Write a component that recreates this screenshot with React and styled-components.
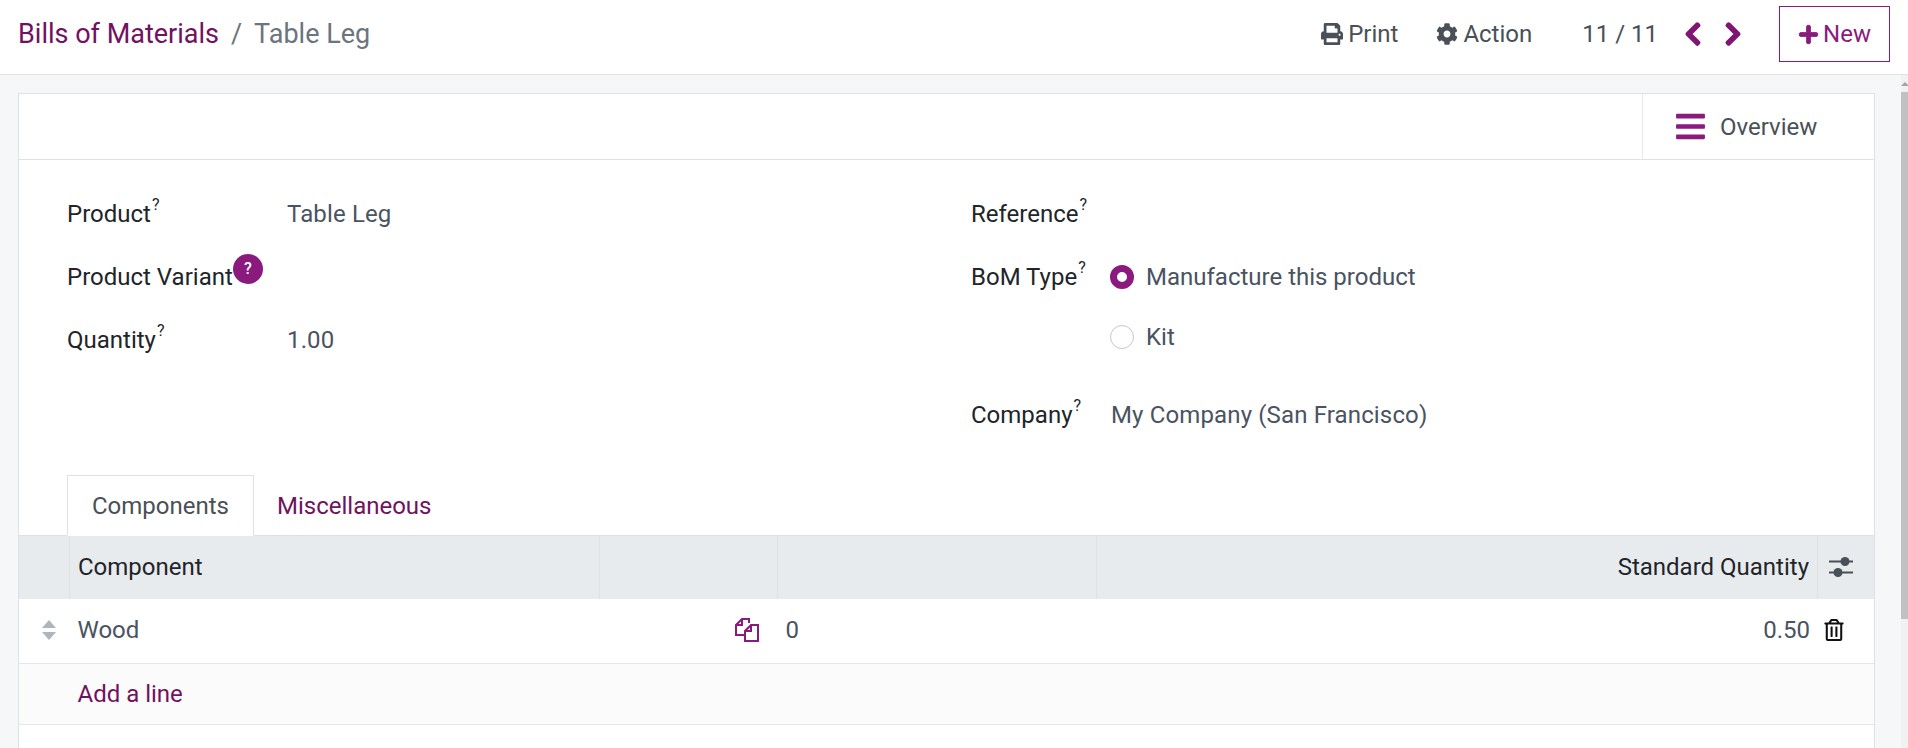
import React from 'react';
import styled, { createGlobalStyle } from 'styled-components';
import { FaPrint, FaCog, FaChevronLeft, FaChevronRight, FaPlus, FaBars, FaRegTrashAlt } from 'react-icons/fa';

const GlobalStyle = createGlobalStyle`
  html, body {
    margin: 0;
    height: 100%;
    overflow: hidden;
  }
  body {
    font-family: Roboto, "Liberation Sans", sans-serif;
    color: #4a4f59;
    background: #f6f7f9;
  }
`;

const Page = styled.div`
  width: 1908px;
  height: 748px;
  display: flex;
  flex-direction: column;
  overflow: hidden;
`;

const Header = styled.header`
  flex: none;
  height: 68px;
  display: flex;
  align-items: center;
  justify-content: space-between;
  padding: 0 18px 6px;
  background: #fff;
  border-bottom: 1px solid #dee2e6;
`;

const Breadcrumb = styled.div`
  display: flex;
  align-items: center;
  gap: 12px;
  font-size: 27px;
`;

const BreadLink = styled.a`
  color: #71125f;
`;

const BreadSep = styled.span`
  color: #6c757d;
`;

const BreadCurrent = styled.span`
  color: #6c757d;
`;

const HeaderActions = styled.div`
  display: flex;
  align-items: center;
`;

const ActionButton = styled.span`
  display: flex;
  align-items: center;
  gap: 5px;
  font-size: 24px;
  color: #495057;
  margin-right: ${(p) => p.$mr}px;
  svg {
    font-size: 22px;
  }
`;

const Pager = styled.span`
  font-size: 24px;
  color: #495057;
  margin-right: 22px;
`;

const PagerNav = styled.span`
  display: flex;
  align-items: center;
  gap: 14px;
  margin-right: 33px;
  color: #7f1673;
  font-size: 26px;
  svg {
    stroke: currentColor;
    stroke-width: 30;
  }
`;

const NewButton = styled.button`
  width: 111px;
  height: 56px;
  display: flex;
  align-items: center;
  justify-content: center;
  gap: 4px;
  padding: 0;
  background: #fff;
  border: 1px solid #8a1a7d;
  color: #8a1a7d;
  font-family: inherit;
  font-size: 24px;
  svg {
    font-size: 21px;
    stroke: currentColor;
    stroke-width: 20;
  }
`;

const Body = styled.div`
  flex: 1;
  display: flex;
  min-height: 0;
`;

const Content = styled.main`
  flex: 1;
  padding: 18px 26px 0 18px;
  min-width: 0;
`;

const Scrollbar = styled.div`
  flex: none;
  width: 7px;
  background: #f1f1f1;
  display: flex;
  flex-direction: column;
`;

const ScrollArrow = styled.div`
  height: 17px;
  display: flex;
  align-items: center;
  justify-content: center;
  &::before {
    content: '';
    border-left: 4px solid transparent;
    border-right: 4px solid transparent;
    border-bottom: 4px solid #a3a3a3;
    margin-left: 1px;
  }
`;

const ScrollThumb = styled.div`
  height: 527px;
  background: #c1c1c1;
`;

const Sheet = styled.section`
  background: #fff;
  border: 1px solid #dee2e6;
  height: 700px;
`;

const StatusBar = styled.div`
  height: 65px;
  display: flex;
  justify-content: flex-end;
  border-bottom: 1px solid #dee2e6;
`;

const OverviewButton = styled.div`
  width: 232px;
  display: flex;
  align-items: center;
  gap: 13px;
  padding-left: 31px;
  box-sizing: border-box;
  border-left: 1px solid #e6e8eb;
  font-size: 24px;
  color: #495057;
  svg {
    font-size: 33px;
    color: #8a1a7d;
  }
`;

const FormGrid = styled.div`
  display: grid;
  grid-template-columns: 904px 1fr;
  padding: 22px 48px 0;
`;

const FormColumn = styled.div`
  display: flex;
  flex-direction: column;
`;

const FieldRow = styled.div`
  display: flex;
  align-items: ${(p) => (p.$top ? 'flex-start' : 'center')};
  min-height: ${(p) => p.$h}px;
  margin-top: ${(p) => p.$mt || 0}px;
`;

const Label = styled.label`
  flex: none;
  width: ${(p) => p.$w}px;
  margin-top: ${(p) => p.$mt || 0}px;
  font-size: 24px;
  color: #212529;
  line-height: 44px;
`;

const Help = styled.sup`
  font-size: 16px;
  line-height: 0;
  vertical-align: 12px;
  margin-left: 1px;
  color: #212529;
`;

const HelpBadge = styled.span`
  position: absolute;
  top: -9px;
  display: inline-flex;
  align-items: center;
  justify-content: center;
  width: 30px;
  height: 30px;
  border-radius: 50%;
  background: #8a1a7d;
  color: #fff;
  font-size: 16px;
  font-weight: 500;
  line-height: 1;
`;

const LabelText = styled.span`
  position: relative;
  display: inline-block;
  line-height: 28px;
`;

const Value = styled.span`
  font-size: 24px;
  letter-spacing: 0.14px;
  color: #4a5361;
  line-height: 44px;
`;

const RadioGroup = styled.div`
  display: flex;
  flex-direction: column;
`;

const RadioRow = styled.div`
  display: flex;
  align-items: center;
  gap: 12px;
  height: ${(p) => p.$h}px;
  font-size: 24px;
  color: #4a5361;
`;

const Radio = styled.span`
  flex: none;
  width: 24px;
  height: 24px;
  box-sizing: border-box;
  border-radius: 50%;
  background: #fff;
  border: ${(p) => (p.$on ? '7.5px solid #8a1a7d' : '1px solid #c4c7cb')};
`;

const Tabs = styled.div`
  display: flex;
  padding-left: 48px;
  margin-top: 29px;
  position: relative;
`;

const Tab = styled.div`
  height: 61px;
  margin-bottom: -1px;
  box-sizing: border-box;
  display: flex;
  align-items: center;
  padding: 0 24px 0 ${(p) => (p.$active ? 24 : 22)}px;
  font-size: 24px;
  position: relative;
  background: ${(p) => (p.$active ? '#fff' : 'transparent')};
  color: ${(p) => (p.$active ? '#495057' : '#71125f')};
  border: 1px solid ${(p) => (p.$active ? '#dee2e6' : 'transparent')};
  border-bottom-color: ${(p) => (p.$active ? '#fff' : 'transparent')};
`;

const Table = styled.div`
  font-size: 24px;
`;

const Row = styled.div`
  display: grid;
  grid-template-columns: 50px 530px 178px 319px 1fr 57px;
  height: ${(p) => p.$h}px;
  padding-bottom: ${(p) => p.$pb || 0}px;
  box-sizing: border-box;
  align-items: center;
  background: ${(p) => p.$bg || '#fff'};
  border-bottom: 1px solid #e4e6e9;
  color: #4a5361;
`;

const HeadRow = styled(Row)`
  border-top: 1px solid #dee2e6;
  border-bottom: 0;
  color: #212529;
  align-items: stretch;
`;

const HeadCell = styled.div`
  display: flex;
  align-items: center;
  justify-content: ${(p) => (p.$right ? 'flex-end' : 'flex-start')};
  padding: 0 ${(p) => p.$pad ?? 8}px 1px;
  border-left: ${(p) => (p.$first ? '0' : '1px solid #dee2e6')};
`;

const Cell = styled.div`
  display: flex;
  align-items: center;
  justify-content: ${(p) => p.$justify || 'flex-start'};
  padding: 0 ${(p) => p.$pad ?? 8.5}px;
`;

const AddLink = styled.a`
  color: #71125f;
`;

const App = () => (
  <Page>
    <GlobalStyle />
    <Header>
      <Breadcrumb>
        <BreadLink>Bills of Materials</BreadLink>
        <BreadSep>/</BreadSep>
        <BreadCurrent>Table Leg</BreadCurrent>
      </Breadcrumb>
      <HeaderActions>
        <ActionButton $mr={38}><FaPrint />Print</ActionButton>
        <ActionButton $mr={50}><FaCog />Action</ActionButton>
        <Pager>11 / 11</Pager>
        <PagerNav><FaChevronLeft /><FaChevronRight /></PagerNav>
        <NewButton><FaPlus />New</NewButton>
      </HeaderActions>
    </Header>
    <Body>
      <Content>
        <Sheet>
          <StatusBar>
            <OverviewButton><FaBars />Overview</OverviewButton>
          </StatusBar>
          <FormGrid>
            <FormColumn>
              <FieldRow $h={63}>
                <Label $w={220}>Product<Help>?</Help></Label>
                <Value>Table Leg</Value>
              </FieldRow>
              <FieldRow $h={63}>
                <Label $w={220}>
                  <LabelText>Product Variant<HelpBadge>?</HelpBadge></LabelText>
                </Label>
              </FieldRow>
              <FieldRow $h={63}>
                <Label $w={220}>Quantity<Help>?</Help></Label>
                <Value>1.00</Value>
              </FieldRow>
            </FormColumn>
            <FormColumn>
              <FieldRow $h={63}>
                <Label $w={139}>Reference<Help>?</Help></Label>
              </FieldRow>
              <FieldRow $h={120} $top>
                <Label $w={139} $mt={10}>BoM Type<Help>?</Help></Label>
                <RadioGroup>
                  <RadioRow $h={63}><Radio $on />Manufacture this product</RadioRow>
                  <RadioRow $h={57}><Radio />Kit</RadioRow>
                </RadioGroup>
              </FieldRow>
              <FieldRow $h={63} $mt={18}>
                <Label $w={140}>Company<Help>?</Help></Label>
                <Value>My Company (San Francisco)</Value>
              </FieldRow>
            </FormColumn>
          </FormGrid>
          <Tabs>
            <Tab $active>Components</Tab>
            <Tab>Miscellaneous</Tab>
          </Tabs>
          <Table>
            <HeadRow $h={64} $bg="#e8ebee">
              <HeadCell $first />
              <HeadCell>Component</HeadCell>
              <HeadCell />
              <HeadCell />
              <HeadCell $right>Standard Quantity</HeadCell>
              <HeadCell $pad={11}>
                <svg width="24" height="22" viewBox="0 0 24 22" fill="none">
                  <path d="M0 5.5h24M0 16.5h24" stroke="#495057" strokeWidth="2" />
                  <circle cx="16" cy="5.5" r="4.5" fill="#495057" />
                  <circle cx="9" cy="16.5" r="4.5" fill="#495057" />
                </svg>
              </HeadCell>
            </HeadRow>
            <Row $h={65} $pb={2}>
              <Cell $justify="center">
                <svg width="16" height="20" viewBox="0 0 16 20" fill="#adb5bd" style={{ marginLeft: 10 }}>
                  <path d="M8 0l7 8H1zM8 20l-7-8h14z" />
                </svg>
              </Cell>
              <Cell>Wood</Cell>
              <Cell $justify="flex-end" $pad={18}>
                <svg width="24" height="24" viewBox="0 0 24 24" fill="none" stroke="#8a1a7d" strokeWidth="2">
                  <path d="M14 5V1H7L1 7v10h8M7 1v6H1" />
                  <path d="M16 7h7v16H10V13zM16 7v6h-6" />
                </svg>
              </Cell>
              <Cell>0</Cell>
              <Cell $justify="flex-end" $pad={7}>0.50</Cell>
              <Cell $pad={6}><FaRegTrashAlt color="#111" size={22} /></Cell>
            </Row>
            <Row $h={61} $bg="#fbfbfb">
              <Cell />
              <Cell><AddLink>Add a line</AddLink></Cell>
            </Row>
          </Table>
        </Sheet>
      </Content>
      <Scrollbar>
        <ScrollArrow />
        <ScrollThumb />
      </Scrollbar>
    </Body>
  </Page>
);

export default App;
